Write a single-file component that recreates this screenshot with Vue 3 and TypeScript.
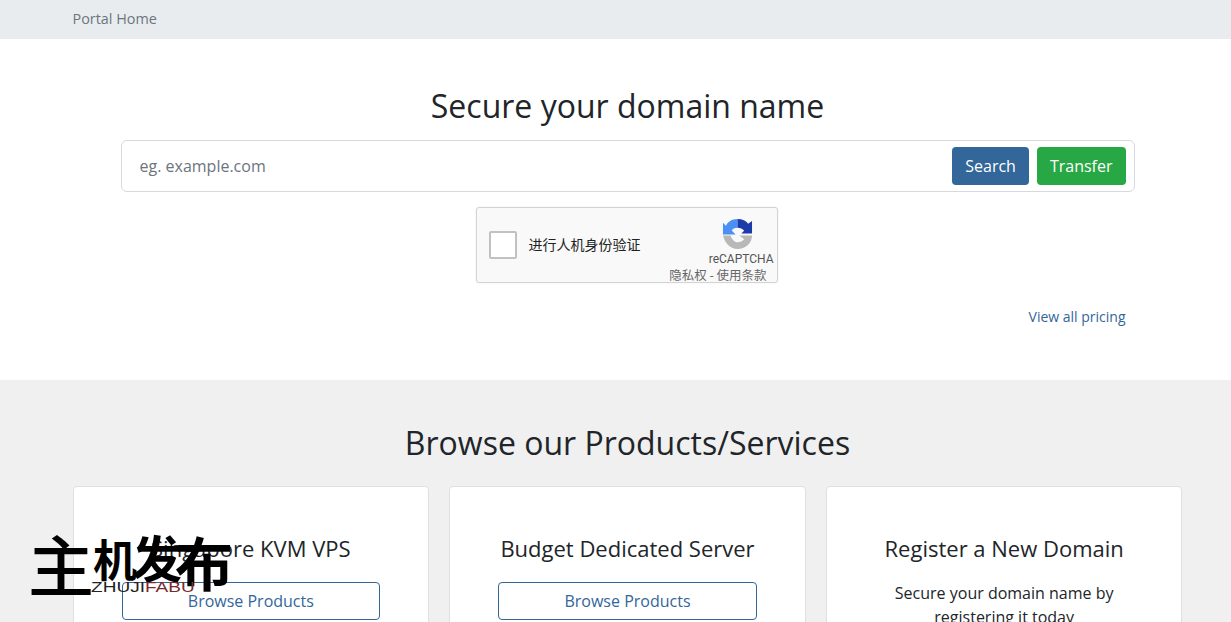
<template>
  <div class="page">
    <nav class="crumb-bar">
      <div class="container">
        <span class="crumb">Portal Home</span>
      </div>
    </nav>

    <section class="hero">
      <div class="container">
        <h2 class="hero-title">Secure your domain name</h2>
        <div class="search-box">
          <span class="search-placeholder">eg. example.com</span>
          <button class="btn btn-search">Search</button>
          <button class="btn btn-transfer">Transfer</button>
        </div>
        <div class="captcha">
          <span class="captcha-check"></span>
          <span class="captcha-label">进行人机身份验证</span>
          <div class="captcha-brand">
            <svg class="captcha-logo" viewBox="0 0 32 32" width="31" height="33">
              <path d="M16 1C10 1 6 4 4 8L1 5V17H14L10 13C11 11 13 10 16 10Z" fill="#4a90f5" />
              <path d="M16 1C21 1 25 3 27 6L31 3V16H20L23 13C21 11 19 10 16 10Z" fill="#1c3aa9" />
              <path d="M1 18H9C10 22 13 25 16 25C19 25 21 24 23 22L18 18H31C31 26 24 32 16 32C9 32 3 26 1 18Z" fill="#b8b8b8" />
            </svg>
            <span class="captcha-name">reCAPTCHA</span>
            <span class="captcha-links">隐私权 - 使用条款</span>
          </div>
        </div>
        <div class="pricing-row">
          <a class="pricing-link">View all pricing</a>
        </div>
      </div>
    </section>

    <section class="products">
      <div class="container">
        <h2 class="products-title">Browse our Products/Services</h2>
        <div class="card-grid">
          <div v-for="card in cards" :key="card.title" class="card">
            <h3 class="card-title">{{ card.title }}</h3>
            <p v-if="card.text" class="card-text">{{ card.text }}</p>
            <a v-else class="btn-outline">Browse Products</a>
          </div>
        </div>
      </div>
    </section>

    <div class="watermark">
      <span class="wm-glyph wm-zhu">主</span>
      <span class="wm-glyph wm-ji">机</span>
      <span class="wm-glyph wm-fa">发</span>
      <span class="wm-glyph wm-bu">布</span>
      <span class="wm-en"><span class="wm-dark">ZHUJI</span><span class="wm-red">FABU</span></span>
    </div>
  </div>
</template>

<script setup lang="ts">
interface Card {
  title: string
  text?: string
}

const cards: Card[] = [
  { title: 'Singapore KVM VPS' },
  { title: 'Budget Dedicated Server' },
  { title: 'Register a New Domain', text: 'Secure your domain name by registering it today' }
]
</script>

<style>
html,
body {
  margin: 0;
  height: 622px;
  overflow: hidden;
  background: #fff;
}
</style>

<style scoped>
.page {
  position: relative;
  width: 1255px;
  height: 622px;
  overflow: hidden;
  font-family: "Open Sans", "Noto Sans CJK SC", sans-serif;
  color: #212529;
}

.container {
  width: 1110px;
  margin: 0 auto;
}

.crumb-bar {
  height: 39px;
  background: #e9ecef;
  display: flex;
  align-items: center;
}

.crumb {
  position: relative;
  top: -2px;
  font-size: 14.4px;
  color: #6c757d;
}

.hero {
  height: 341px;
  background: #fff;
}

.hero-title {
  margin: 0;
  padding-top: 45px;
  font-size: 32px;
  font-weight: 400;
  line-height: 44px;
  text-align: center;
}

.search-box {
  display: flex;
  align-items: center;
  gap: 8px;
  box-sizing: border-box;
  height: 52px;
  margin: 12px 48px 0;
  padding: 0 8px 0 18px;
  border: 1px solid #d8d8de;
  border-radius: 6px;
  background: #fff;
}

.search-placeholder {
  flex: 1;
  font-size: 16px;
  color: #6c757d;
}

.btn {
  height: 38px;
  padding: 0 13px;
  border: none;
  border-radius: 4px;
  font-family: inherit;
  font-size: 16px;
  color: #fff;
}

.btn-search {
  background: #336699;
}

.btn-transfer {
  background: #28a745;
}

.captcha {
  display: flex;
  align-items: center;
  box-sizing: border-box;
  position: relative;
  width: 302px;
  height: 76px;
  margin: 15px 0 0 403px;
  padding-left: 12px;
  border: 1px solid #d3d3d3;
  border-radius: 3px;
  background: #f9f9f9;
  box-shadow: 0 0 2px rgba(0, 0, 0, 0.08);
  font-family: Roboto, "Noto Sans CJK SC", sans-serif;
}

.captcha-check {
  width: 24px;
  height: 24px;
  border: 2px solid #c1c1c1;
  border-radius: 2px;
  background: #fff;
}

.captcha-label {
  position: relative;
  top: -1px;
  margin-left: 12px;
  font-size: 14px;
  color: #222;
}

.captcha-brand {
  position: absolute;
  top: 9px;
  right: 3px;
  display: flex;
  flex-direction: column;
  align-items: flex-end;
}

.captcha-logo {
  margin-right: 21px;
}

.captcha-name {
  margin-top: 2px;
  font-size: 12px;
  line-height: 14px;
  color: #555;
}

.captcha-links {
  margin: 1px 7px 0 0;
  font-size: 12.500px;
  line-height: 18px;
  color: #666;
}

.pricing-row {
  display: flex;
  justify-content: flex-end;
  margin: 24px 57px 0 0;
}

.pricing-link {
  font-size: 14px;
  line-height: 20px;
  color: #336699;
}

.products {
  height: 242px;
  background: #f0f0f0;
}

.products-title {
  margin: 0;
  padding-top: 41px;
  font-size: 32px;
  font-weight: 400;
  line-height: 44px;
  text-align: center;
}

.card-grid {
  display: grid;
  grid-template-columns: repeat(3, 1fr);
  gap: 20px;
  margin-top: 21px;
}

.card {
  box-sizing: border-box;
  height: 220px;
  padding: 46px 48px 0;
  border: 1px solid #e0e0e0;
  border-radius: 4px;
  background: #fff;
  text-align: center;
}

.card-title {
  margin: 0;
  font-size: 22px;
  font-weight: 400;
  line-height: 30px;
}

.card-text {
  margin: 18px 0 0;
  font-size: 16px;
  line-height: 24px;
}

.btn-outline {
  display: block;
  box-sizing: border-box;
  height: 38px;
  margin-top: 19px;
  border: 1px solid #336699;
  border-radius: 4px;
  font-size: 16px;
  line-height: 36px;
  color: #336699;
}

.watermark {
  position: absolute;
  left: 0;
  top: 0;
  pointer-events: none;
}

.wm-glyph {
  position: absolute;
  font-family: "Noto Sans CJK SC", sans-serif;
  font-weight: 700;
  line-height: 1;
  color: #000;
}

.wm-zhu {
  left: 28px;
  top: 529px;
  font-size: 66px;
  font-weight: 500;
}

.wm-ji {
  left: 93px;
  top: 536px;
  font-size: 44px;
}

.wm-fa {
  left: 132px;
  top: 531px;
  font-size: 50px;
}

.wm-bu {
  left: 175px;
  top: 532px;
  font-size: 58px;
}

.wm-en {
  position: absolute;
  left: 91px;
  top: 579px;
  font-family: "Liberation Sans", sans-serif;
  font-size: 15px;
  line-height: 15px;
  white-space: nowrap;
  transform: scaleX(1.27);
  transform-origin: left center;
}

.wm-dark {
  color: #222;
}

.wm-red {
  color: #7a2a2a;
}
</style>
